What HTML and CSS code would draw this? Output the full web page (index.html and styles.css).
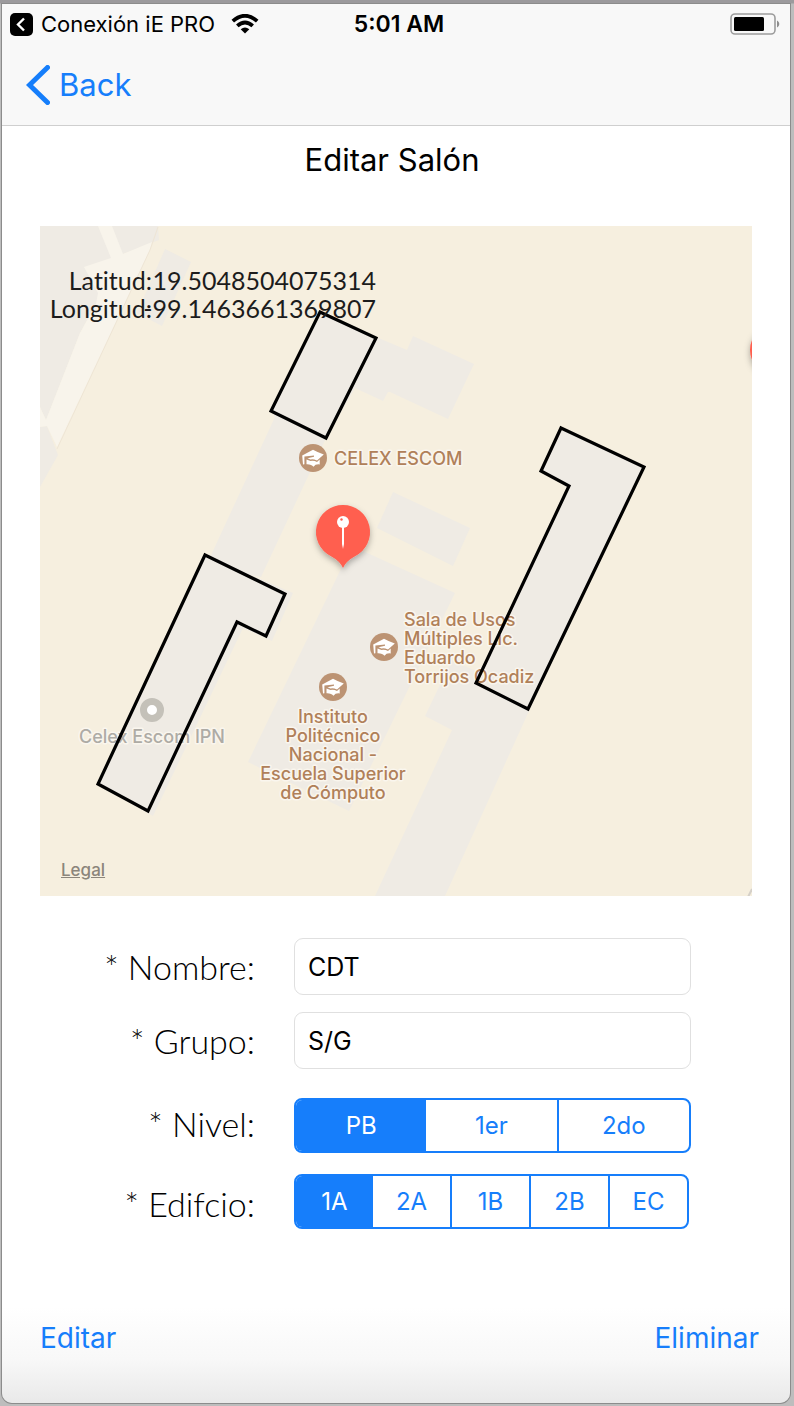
FILE: index.html
```
<!DOCTYPE html>
<html lang="es">
<head>
<meta charset="utf-8">
<meta name="viewport" content="width=device-width, initial-scale=1">
<title>Editar Salón</title>
<link rel="stylesheet" href="styles.css">
</head>
<body>
<div class="screen">
  <header class="top">
    <div class="status">
      <a class="status-app" href="#">
        <svg width="23" height="23" viewBox="0 0 23 23" aria-hidden="true"><rect width="23" height="23" rx="5"/><path d="M14 5.5 8 11.5l6 6" fill="none" stroke="#fff" stroke-width="2.4"/></svg>
        <span>Conexión iE PRO</span>
        <svg class="wifi" width="28" height="20" viewBox="0 0 28 20" aria-hidden="true"><g fill="none" stroke="#000" stroke-width="3.8"><path d="M1.8 7.2Q14-3.6 26.2 7.2"/><path d="M6.3 11.9Q14 5 21.700 11.9"/></g><path d="M9.700 15.200Q14 11.600 18.300 15.200L14 19.600Z"/></svg>
      </a>
      <time class="clock">5:01 AM</time>
      <svg class="battery" width="50" height="22" viewBox="0 0 50 22" aria-hidden="true"><rect x="1" y="1" width="44" height="20" rx="4" fill="none" stroke="#9c9c9c" stroke-width="1.600"/><rect x="4" y="4" width="30" height="14" rx="1.500"/><path d="M47 7.500c3 1.500 3 5.500 0 7z" fill="#8e8e8e"/></svg>
    </div>
    <nav class="nav">
      <a class="back" href="#">
        <svg width="24" height="40" viewBox="0 0 24 40" aria-hidden="true"><path d="M21.500 2.500 3.500 20l18 17.500" fill="none" stroke="#167efb" stroke-width="5" stroke-linecap="round"/></svg>
        Back
      </a>
    </nav>
  </header>

  <main>
    <h1 class="title">Editar Salón</h1>
    <section class="map" aria-label="Mapa">
      <svg class="map-art" viewBox="0 0 712 670">
        <defs>
          <filter id="drop" x="-40%" y="-40%" width="180%" height="180%"><feDropShadow dx="0" dy="3" stdDeviation="3" flood-color="#000" flood-opacity=".3"/></filter>
          <g id="school">
            <circle r="14" fill="#bc9373"/>
            <path fill="#fff" d="M-10.800-2.400 0-8.300Q5-5.500 10.800-3.600L4 2.600Q0 .8-2.500 1.600L-5.500.2 1-1.200V-2.400L-8.600-1.400V6.200L-10 6.400Z"/>
            <path fill="#fff" d="M-6.500 1.400-2.500 3Q1 2.400 4 4L6.700 1.600V6.400Q2.500 5.800 .5 8.700Q-1.500 6-6.500 6.200Z"/>
          </g>
        </defs>
        <rect width="712" height="670" fill="#f6efdf"/>
        <g fill="#efebe4">
          <path d="M0 0H118L119 14 83 28 40 107 6 194 0 181Z"/>
          <path d="M0 201 7 200 18 229 0 261Z"/>
          <path d="M125 23 151 36 122 100 97 87Z"/>
          <path d="M280 86 336 111 367 124 373 110 434 138 408 193 350 166 348 166 343 175 315 162 286 212 221 351 166 340 235 191 231 185Z"/>
          <path d="M353 266 430 302 413 340 337 302Z"/>
          <path d="M312 320 415 367 309 585 208 536Z"/>
          <path d="M165 329 253 367 232 415 203 402 113 590 58 558Z"/>
          <path d="M521 202 604 241 489 485 405 670H335L412 504 385 490 412 434 440 447 529 260 501 245Z"/>
        </g>
        <path fill="#f8f4eb" d="M58 0H72L83 28 112 16 110 24 17 221 7 200 0 201V181L6 194 40 107 56 78 58 67 44 41 71 32Z"/>
        <path fill="none" stroke="#eee5d5" d="M118 1 110 24 17 223"/>
        <path fill="none" stroke="#d5d0c8" stroke-width="2" d="M712 663 708 671"/>

        <use href="#school" x="273" y="232"/>
        <use href="#school" x="344" y="421"/>
        <use href="#school" x="293" y="461"/>
        <circle cx="112" cy="484" r="8.500" fill="#fff" stroke="#c4c1b9" stroke-width="7"/>

        <g class="place">
          <text x="294" y="239">CELEX ESCOM</text>
          <text><tspan x="364" y="400">Sala de Usos</tspan><tspan x="364" y="419">Múltiples Lic.</tspan><tspan x="364" y="438">Eduardo</tspan><tspan x="364" y="457">Torrijos Ocadiz</tspan></text>
          <text text-anchor="middle"><tspan x="293" y="497">Instituto</tspan><tspan x="293" y="516">Politécnico</tspan><tspan x="293" y="535">Nacional -</tspan><tspan x="293" y="554">Escuela Superior</tspan><tspan x="293" y="573">de Cómputo</tspan></text>
          <text class="place-gray" x="112" y="517" text-anchor="middle">Celex Escom IPN</text>
        </g>

        <g fill="none" stroke="#000" stroke-width="3.200">
          <path d="M280 86 336 112 286 212 231 185Z"/>
          <path d="M165 329 245 368 226 410 197 396 108 585 58 558Z"/>
          <path d="M521 202 604 241 488 483 436 457 529 260 501 245Z"/>
        </g>

        <g filter="url(#drop)" fill="#ff5e4f">
          <path d="M303 279a27 27 0 0 1 12 51.200Q306 335 303 342Q300 335 291 330.200A27 27 0 0 1 303 279Z"/>
          <circle cx="736" cy="124" r="26"/>
        </g>
        <circle cx="303" cy="296" r="6" fill="#fff"/>
        <path fill="#fff" d="M302 301H304V318L303 323 302 318Z"/>
        <circle cx="301.500" cy="293.500" r="1.200" fill="#ff5e4f"/>
      </svg>
      <dl class="coords">
        <dt>Latitud:</dt><dd>19.5048504075314</dd>
        <dt>Longitud:</dt><dd>-99.1463661369807</dd>
      </dl>
      <a class="legal" href="#">Legal</a>
    </section>

    <form class="form" id="room">
      <label class="label" for="nombre">* Nombre:</label>
      <input class="field" id="nombre" type="text" value="CDT">
      <label class="label" for="grupo">* Grupo:</label>
      <input class="field" id="grupo" type="text" value="S/G">
      <span class="label label-seg" id="nivel">* Nivel:</span>
      <div class="seg" role="radiogroup" aria-labelledby="nivel">
        <label><input type="radio" name="nivel" checked><span>PB</span></label>
        <label><input type="radio" name="nivel"><span>1er</span></label>
        <label><input type="radio" name="nivel"><span>2do</span></label>
      </div>
      <span class="label label-seg" id="edificio">* Edifcio:</span>
      <div class="seg seg-last" role="radiogroup" aria-labelledby="edificio">
        <label><input type="radio" name="edificio" checked><span>1A</span></label>
        <label><input type="radio" name="edificio"><span>2A</span></label>
        <label><input type="radio" name="edificio"><span>1B</span></label>
        <label><input type="radio" name="edificio"><span>2B</span></label>
        <label><input type="radio" name="edificio"><span>EC</span></label>
      </div>
    </form>
  </main>

  <footer class="actions">
    <button type="submit" form="room">Editar</button>
    <button type="button">Eliminar</button>
  </footer>
</div>
</body>
</html>
```
FILE: styles.css
```
* { box-sizing: border-box; }

body {
  margin: 0;
  min-height: 100vh;
  padding: 4px 4px 3px 2px;
  background: linear-gradient(#9c9a9d 3px, #bdbdbd 4px);
  font-family: Inter, "Liberation Sans", sans-serif;
  color: #000;
  display: flex;
}

.screen {
  flex: 1;
  min-width: 0;
  display: flex;
  flex-direction: column;
  background: linear-gradient(to top, #e9e9e9, #f8f8f8 44px, #fff 96px);
  border-radius: 0 0 10px 10px;
  box-shadow: 0 0 0 1px #8c8c8c;
}

a { color: inherit; text-decoration: none; }

.top {
  background: #f8f8f8;
  border-bottom: 1px solid #cfcfcf;
}

.status {
  display: grid;
  grid-template-columns: 1fr auto 1fr;
  align-items: center;
  height: 40px;
  padding: 0 10px 0 8px;
  font-size: 22px;
}

.status-app { display: flex; align-items: center; gap: 8px; }
.wifi { margin-left: 8px; }
.clock { font-size: 23px; font-weight: 600; padding-left: 8px; }
.battery { justify-self: end; }

.nav { height: 81px; padding: 0 24px; display: flex; align-items: center; }

.back {
  display: flex;
  align-items: center;
  gap: 9px;
  color: #167efb;
  font-size: 31px;
  line-height: 38px;
}

.title {
  margin: 0;
  padding: 14px 8px 0 0;
  height: 100px;
  text-align: center;
  font-weight: 400;
  font-size: 31px;
  line-height: 40px;
}

.map { position: relative; margin: 0 38px; }
.map-art { display: block; width: 100%; height: auto; }

.place {
  font-size: 18px;
  font-weight: 500;
  fill: #b08059;
  stroke: #faf6ee;
  stroke-width: 3px;
  stroke-linejoin: round;
  paint-order: stroke;
}
.place-gray { fill: #aeaba5; }

.coords {
  position: absolute;
  left: 4px;
  top: 40px;
  margin: 0;
  display: grid;
  grid-template-columns: 108px 224px;
  justify-items: end;
  font-family: Lato, "Liberation Sans", sans-serif;
  font-size: 25px;
  line-height: 28px;
  font-variant-ligatures: none;
  color: #1c1c1c;
}
.coords dt, .coords dd { margin: 0; white-space: nowrap; }

.legal {
  position: absolute;
  left: 21px;
  bottom: 16px;
  font-size: 17px;
  font-weight: 500;
  color: #8b857b;
  text-decoration: underline;
}

.form {
  display: grid;
  grid-template-columns: 253px 1fr;
  column-gap: 39px;
  row-gap: 17px;
  align-items: center;
  padding: 42px 99px 0 0;
}

.label {
  text-align: right;
  font-family: Lato, "Liberation Sans", sans-serif;
  font-size: 34px;
  font-weight: 300;
  line-height: 40px;
  font-variant-ligatures: none;
}

.field {
  width: 100%;
  min-width: 0;
  height: 57px;
  padding: 0 13px;
  border: 1px solid #e0e0e0;
  border-radius: 9px;
  background: #fff;
  font: 25px Inter, "Liberation Sans", sans-serif;
  color: #000;
}

.seg {
  display: flex;
  height: 55px;
  margin-top: 12px;
  border: 2px solid #167efb;
  border-radius: 8px;
  overflow: hidden;
  color: #167efb;
  font-size: 24px;
}
.label-seg { margin-top: 8px; }
.seg-last { margin: 4px 2px 0 0; }
.seg label { flex: 1; position: relative; display: flex; }
.seg label + label { border-left: 2px solid #167efb; }
.seg label:first-child { margin-right: -2px; }
.seg input { position: absolute; inset: 0; margin: 0; opacity: 0; }
.seg span { flex: 1; display: flex; align-items: center; justify-content: center; }
.seg input:checked + span { background: #167efb; color: #fff; }

.actions {
  margin-top: auto;
  display: flex;
  justify-content: space-between;
  padding: 0 31px 45px 38px;
}
.actions button {
  padding: 0;
  border: 0;
  background: none;
  color: #167efb;
  font: 28px/40px Inter, "Liberation Sans", sans-serif;
}
```
